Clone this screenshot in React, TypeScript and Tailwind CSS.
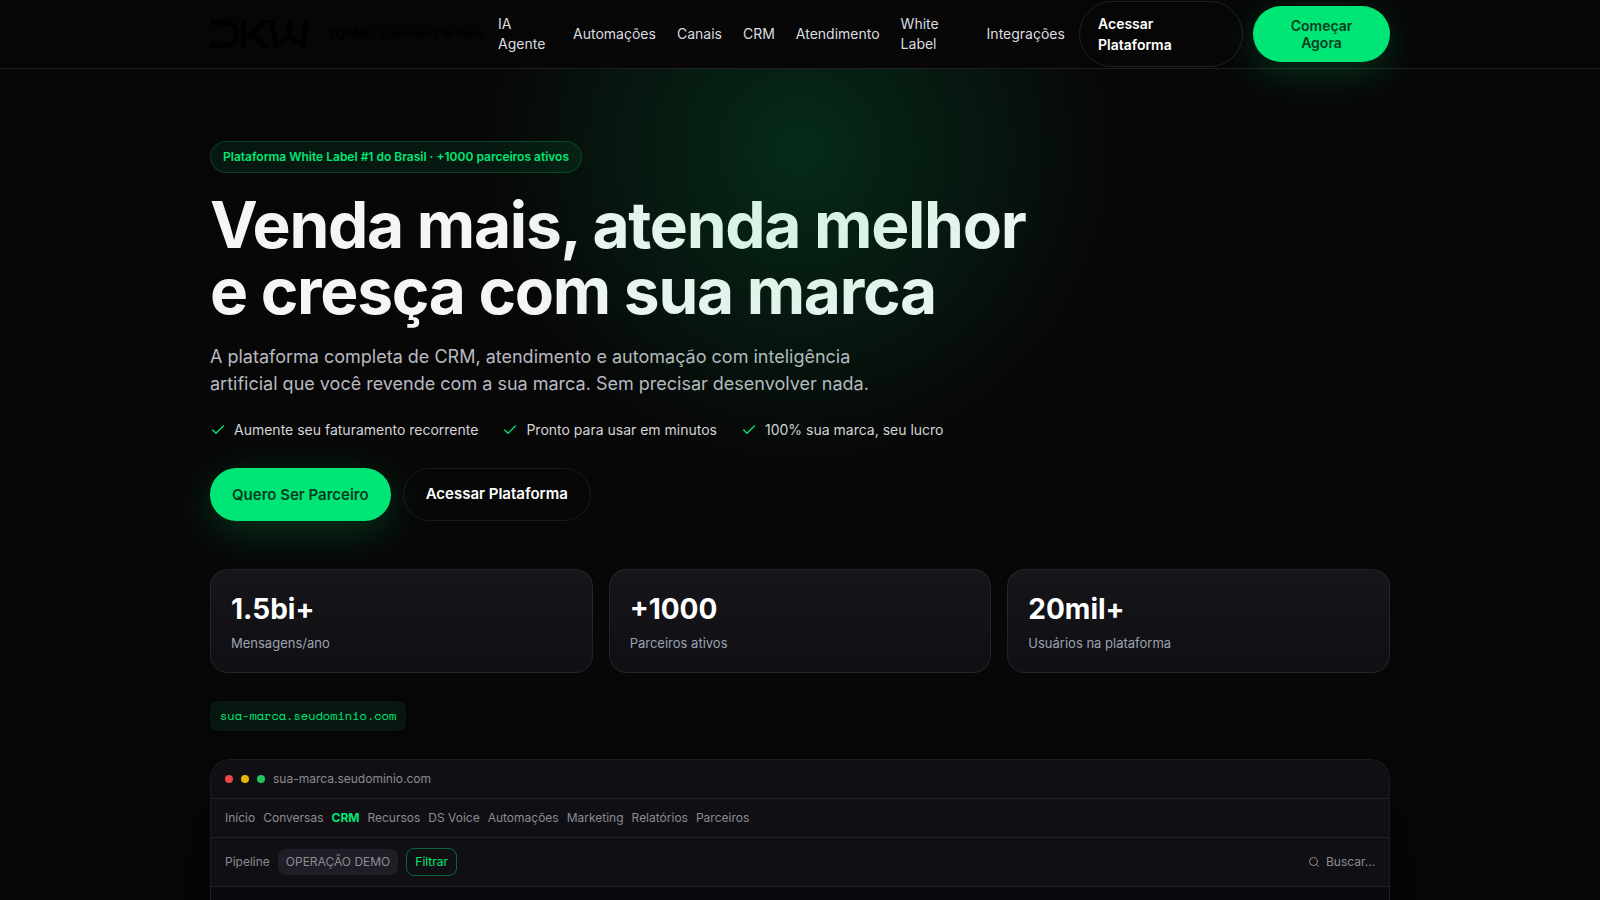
import { Check, Search } from "lucide-react";

const navLinks = [
  { label: "IA Agente", width: "w-[54px]" },
  { label: "Automações", width: "" },
  { label: "Canais", width: "" },
  { label: "CRM", width: "" },
  { label: "Atendimento", width: "" },
  { label: "White Label", width: "w-[65px]" },
  { label: "Integrações", width: "" },
];

const benefits = [
  "Aumente seu faturamento recorrente",
  "Pronto para usar em minutos",
  "100% sua marca, seu lucro",
];

const stats = [
  { value: "1.5bi+", label: "Mensagens/ano" },
  { value: "+1000", label: "Parceiros ativos" },
  { value: "20mil+", label: "Usuários na plataforma" },
];

const appTabs = [
  "Início",
  "Conversas",
  "CRM",
  "Recursos",
  "DS Voice",
  "Automações",
  "Marketing",
  "Relatórios",
  "Parceiros",
];

function Logo() {
  return (
    <svg
      viewBox="0 0 99 28"
      className="h-7 w-[99px] shrink-0"
      fill="none"
      stroke="#000"
      strokeWidth="5"
      role="img"
      aria-label="DKW"
    >
      <path d="M0 2.5H15C22 2.5 26.500 7 26.500 14S22 25.500 15 25.500H0" />
      <path d="M33.500 0V28" />
      <path d="M57 0L37 17.500M42 13L56 28" />
      <path d="M61 0L66 25L79.500 16.500L93 25L97 0M79.500 0V17" />
    </svg>
  );
}

function MetaMark() {
  return (
    <svg
      viewBox="0 0 15 10"
      className="h-[10px] w-[15px] shrink-0"
      fill="none"
      stroke="#000"
      strokeWidth="1.700"
      aria-hidden="true"
    >
      <path d="M1 7C1 3.500 2.500 1 4.300 1C7.300 1 8.200 9 11.700 9C13.300 9 14 8 14 6.500C14 3.500 12.500 1 10.700 1C7.700 1 6.500 9 3 9C1.600 9 1 8.200 1 7Z" />
    </svg>
  );
}

function Header() {
  return (
    <header className="relative z-20 border-b border-white/10 bg-[#060606]/95">
      <div className="mx-auto flex h-[68px] max-w-[1180px] items-center justify-between">
        <div className="flex items-center gap-[21px]">
          <a href="#inicio">
            <Logo />
          </a>
          <span className="flex w-[154px] items-center gap-[2px] whitespace-nowrap text-xs font-semibold text-black">
            <MetaMark />
            Meta Business Partners
          </span>
        </div>
        <nav className="flex items-center gap-[21px] text-sm text-[#dcdce0]">
          {navLinks.map((link) => (
            <a key={link.label} href="#recursos" className={link.width}>
              {link.label}
            </a>
          ))}
        </nav>
        <div className="flex items-center gap-[10px]">
          <a
            href="#entrar"
            className="w-[164px] rounded-full border border-white/10 px-[18px] py-[11px] text-sm leading-[21px] font-semibold text-white"
          >
            <span className="block w-[90px]">Acessar Plataforma</span>
          </a>
          <button
            type="button"
            className="w-[137px] rounded-full bg-[#00e676] px-8 py-[11px] text-sm leading-[17px] font-semibold text-[#053d20] shadow-[0_10px_40px_rgba(0,230,118,0.2)]"
          >
            Começar Agora
          </button>
        </div>
      </div>
    </header>
  );
}

function Hero() {
  return (
    <section id="inicio" className="flex flex-col items-start">
      <p className="rounded-full border border-[#00e676]/20 bg-[#00e676]/8 px-3 py-[6px] text-xs leading-[18px] font-semibold text-[#00e676]">
        Plataforma White Label #1 do Brasil · +1000 parceiros ativos
      </p>
      <h1 className="mt-[19px] text-[64px] leading-[66px] font-bold tracking-[-0.02em] text-[#f5f5f5]">
        Venda mais, atenda melhor
        <br />e cresça com sua marca
      </h1>
      <p className="mt-[19px] max-w-[680px] text-lg leading-[27px] text-[#b9b9c1]">
        A plataforma completa de CRM, atendimento e automação com inteligência artificial que você
        revende com a sua marca. Sem precisar desenvolver nada.
      </p>
      <ul className="mt-[22px] flex gap-6 text-sm leading-[21px] text-[#d4d4d8]">
        {benefits.map((benefit) => (
          <li key={benefit} className="flex items-center gap-2">
            <Check size={16} strokeWidth={2} className="text-[#00e676]" />
            {benefit}
          </li>
        ))}
      </ul>
      <div className="mt-7 flex gap-3 text-[15px] font-semibold">
        <button
          type="button"
          className="rounded-full bg-[#00e676] px-[22px] py-[15px] leading-[23px] text-[#053d20] shadow-[0_10px_40px_rgba(0,230,118,0.2)]"
        >
          Quero Ser Parceiro
        </button>
        <a
          href="#entrar"
          className="rounded-full border border-white/8 px-[22px] py-[14px] leading-[21px] text-white"
        >
          Acessar Plataforma
        </a>
      </div>
    </section>
  );
}

function Stats() {
  return (
    <dl className="mt-12 grid grid-cols-3 gap-4">
      {stats.map((stat) => (
        <div
          key={stat.label}
          className="flex flex-col-reverse gap-[6px] rounded-[18px] border border-white/8 bg-linear-to-b from-[#15151a] to-[#101014] px-5 pt-[21px] pb-[19px]"
        >
          <dt className="text-[13px] leading-5 text-[#9ca3af]">{stat.label}</dt>
          <dd className="text-[28px] leading-9 font-bold text-white">{stat.value}</dd>
        </div>
      ))}
    </dl>
  );
}

function AppPreview() {
  return (
    <section className="mt-7 h-[420px] overflow-hidden rounded-[20px] border border-white/8 bg-[#0a0a0e] text-xs leading-[18px] text-[#8b8b92] shadow-[0_30px_80px_rgba(0,0,0,0.5)]">
      <div className="flex items-center gap-2 border-b border-white/8 bg-[#101014] px-[14px] py-[10px]">
        <span className="size-2 rounded-full bg-[#ef4444]" />
        <span className="size-2 rounded-full bg-[#eab308]" />
        <span className="size-2 rounded-full bg-[#22c55e]" />
        <span>sua-marca.seudominio.com</span>
      </div>
      <nav className="flex gap-2 border-b border-white/8 bg-[#101014] px-[14px] py-[10px]">
        {appTabs.map((tab) => (
          <a key={tab} href="#crm" className={tab === "CRM" ? "font-bold text-[#00e676]" : ""}>
            {tab}
          </a>
        ))}
      </nav>
      <div className="flex items-center gap-2 border-b border-white/8 bg-[#101014] px-[14px] py-[10px]">
        <span>Pipeline</span>
        <span className="rounded-lg bg-[#1e1e26] px-2 py-1">OPERAÇÃO DEMO</span>
        <button type="button" className="rounded-lg border border-[#00e676]/40 px-2 py-1 text-[#00e676]">
          Filtrar
        </button>
        <label className="ml-auto flex items-center gap-[6px]">
          <Search size={12} />
          <input
            type="text"
            aria-label="Buscar"
            placeholder="Buscar..."
            className="w-[49px] bg-transparent outline-none placeholder:text-[#8b8b92]"
          />
        </label>
      </div>
    </section>
  );
}

export default function App() {
  return (
    <div className="relative h-screen overflow-hidden bg-[#070707] font-['Inter',sans-serif]">
      <Header />
      <main className="mx-auto max-w-[1180px] pt-[72px]">
        <Hero />
        <Stats />
        <p className="mt-7 w-fit rounded-lg bg-[#00e676]/8 px-[10px] py-[6px] font-['Space_Mono','Liberation_Mono',monospace] text-xs leading-[18px] text-[#00e676]">
          sua-marca.seudominio.com
        </p>
        <AppPreview />
      </main>
      <div
        aria-hidden="true"
        className="pointer-events-none absolute inset-x-0 top-0 z-10 h-[600px] bg-[radial-gradient(circle_at_50%_150px,rgba(0,230,118,0.16),transparent_315px)]"
      />
    </div>
  );
}
